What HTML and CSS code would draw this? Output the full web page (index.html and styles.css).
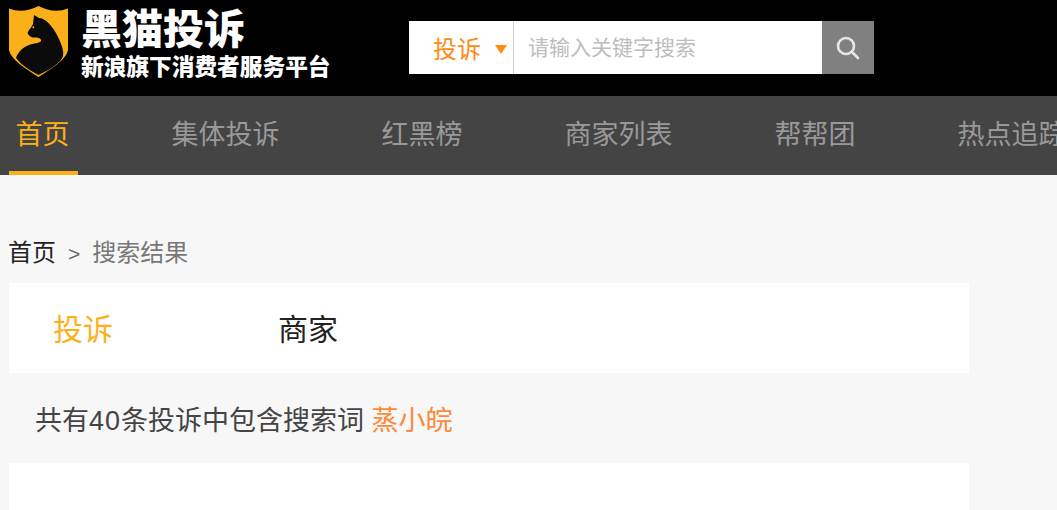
FILE: index.html
```html
<!DOCTYPE html>
<html lang="zh-CN">
<head>
    <meta charset="UTF-8">
    <meta name="viewport" content="width=device-width, initial-scale=1.0">
    <title>黑猫投诉</title>
    <link rel="stylesheet" href="styles.css">
</head>
<body>
    <header class="top-bar">
        <div class="logo">
            <svg class="logo-shield" viewBox="0 0 59 71" width="59" height="71">
                <path d="M0 2.5 Q14 8 29.5 0 Q45 8 59 2.5 L59 44 C57 54 42 63 29.5 71 C17 63 2 54 0 44 Z" fill="#fbb01a"/>
                <path d="M25 9 L30 12 C36 12 44 20 49 31 C53 39 55 45 54 50 C52 57 40 64 29.5 69 C22 65 13 60 7 52 C9 46 14 41 20 39 C26 37 33 37 32 34 C31 31 27 32 24 31.5 C22 31 20 30 18.5 27 C20 23 23 21 24 18 Z" fill="#0b0b0b"/>
                <circle cx="24.3" cy="21.3" r="1" fill="#fbb01a"/>
            </svg>
            <div class="logo-text">
                <div class="logo-name">黑猫投诉</div>
                <div class="logo-sub">新浪旗下消费者服务平台</div>
            </div>
        </div>
        <form class="search">
            <div class="search-type">投诉<span class="caret"></span></div>
            <input class="search-input" type="text" placeholder="请输入关键字搜索">
            <button class="search-btn" type="button" aria-label="搜索">
                <svg viewBox="0 0 26 26" width="26" height="26" fill="none" stroke="#e6e6e6" stroke-width="2.6" stroke-linecap="round">
                    <circle cx="11" cy="11" r="8"/>
                    <path d="M17 17 L23 23"/>
                </svg>
            </button>
        </form>
    </header>

    <nav class="main-nav">
        <a class="nav-item active" href="#">首页</a>
        <a class="nav-item" href="#">集体投诉</a>
        <a class="nav-item" href="#">红黑榜</a>
        <a class="nav-item" href="#">商家列表</a>
        <a class="nav-item" href="#">帮帮团</a>
        <a class="nav-item" href="#">热点追踪</a>
    </nav>

    <main class="content">
        <div class="breadcrumb">
            <a href="#">首页</a><span class="sep">&gt;</span><span class="current">搜索结果</span>
        </div>
        <div class="tabs">
            <a class="tab active" href="#">投诉</a>
            <a class="tab" href="#">商家</a>
        </div>
        <p class="result-count">共有<span class="num">40</span>条投诉中包含搜索词 <span class="keyword">蒸小皖</span></p>
        <div class="result-list"></div>
    </main>
</body>
</html>
```

FILE: styles.css
```css
html, body {
    height: 510px;
    overflow: hidden;
}
body {
    margin: 0;
    background: #f7f7f7;
    font-family: "Liberation Sans", "Noto Sans CJK SC", sans-serif;
    color: #222;
}
a {
    text-decoration: none;
    color: inherit;
}
.top-bar {
    display: flex;
    height: 96px;
    background: #000;
    box-sizing: border-box;
    padding: 6px 0 0 9px;
}
.logo {
    display: flex;
    width: 400px;
    height: 72px;
    flex-shrink: 0;
}
.logo-shield {
    flex-shrink: 0;
}
.logo-text {
    margin-left: 13px;
    color: #fff;
    font-weight: 900;
    white-space: nowrap;
}
.logo-name {
    font-size: 41px;
    line-height: 48px;
}
.logo-sub {
    margin-top: 1px;
    font-size: 22.7px;
    line-height: 24px;
}
.search {
    display: flex;
    width: 465px;
    height: 53px;
    margin: 15px 0 0 0;
}
.search-type {
    display: flex;
    align-items: center;
    box-sizing: border-box;
    width: 105px;
    padding-left: 24px;
    background: #fff;
    border-right: 1px solid #d0d0d0;
    color: #ff8a14;
    font-size: 24px;
}
.caret {
    width: 0;
    height: 0;
    margin-left: 14px;
    margin-top: 3px;
    border-left: 6px solid transparent;
    border-right: 6px solid transparent;
    border-top: 9px solid #ff8a14;
}
.search-input {
    flex: 1;
    min-width: 0;
    border: none;
    outline: none;
    padding: 0 0 0 14px;
    background: #fff;
    font-family: inherit;
    font-size: 21px;
}
.search-input::placeholder {
    color: #bdbdbd;
    opacity: 1;
}
.search-btn {
    display: flex;
    align-items: center;
    justify-content: center;
    width: 52px;
    border: none;
    padding: 0;
    background: #808080;
}
.main-nav {
    display: flex;
    gap: 87px;
    height: 79px;
    padding-left: 9px;
    background: #444;
    white-space: nowrap;
}
.nav-item {
    box-sizing: border-box;
    height: 79px;
    padding: 0 8.5px 0 6.5px;
    line-height: 78px;
    font-size: 27px;
    color: #999;
}
.nav-item.active {
    color: #fbb01a;
    border-bottom: 4px solid #fbb01a;
}
.content {
    width: 960px;
    margin-left: 9px;
}
.breadcrumb {
    margin: 60px 0 0 -1px;
    height: 48px;
    line-height: 36px;
    font-size: 24px;
    color: #222;
}
.sep {
    margin: 0 12px;
    font-size: 21px;
    color: #666;
}
.current {
    color: #777;
}
.tabs {
    display: flex;
    height: 90px;
    padding-left: 44px;
    background: #fff;
}
.tab {
    width: 225px;
    line-height: 94px;
    font-size: 30px;
    color: #222;
}
.tab.active {
    color: #fbb01a;
}
.result-count {
    margin: 0;
    height: 90px;
    padding-left: 26px;
    line-height: 96px;
    font-size: 27px;
    color: #444;
}
.num {
    letter-spacing: 1px;
}
.keyword {
    color: #fb8a3c;
}
.result-list {
    height: 47px;
    background: #fff;
}
```
